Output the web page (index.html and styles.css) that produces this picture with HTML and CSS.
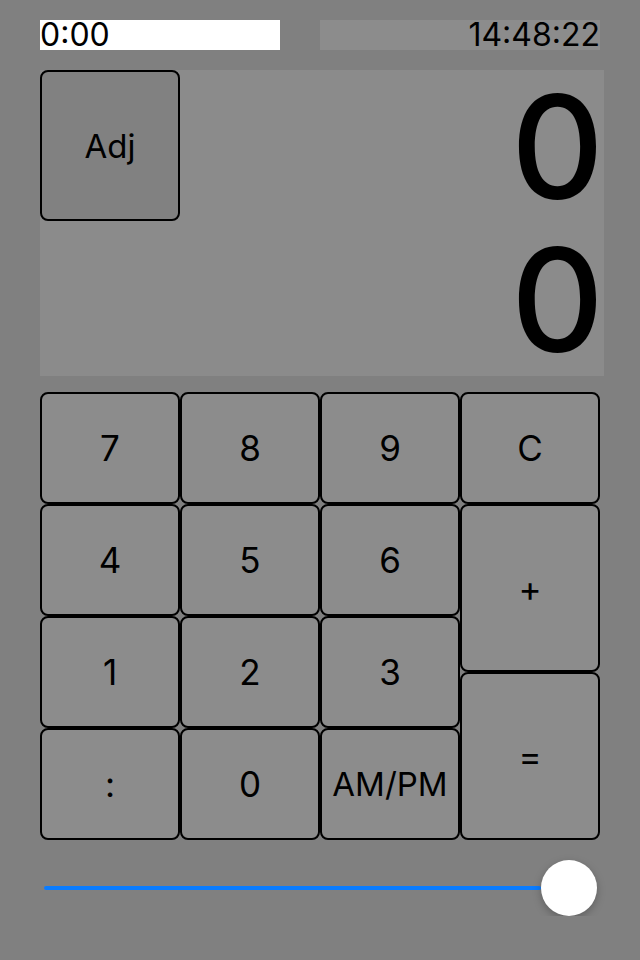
FILE: index.html
```html
<!DOCTYPE html>
<html lang="en">
<head>
    <meta charset="UTF-8">
    <meta name="viewport" content="width=device-width, initial-scale=1.0">
    <title>Time Calculator</title>
    <link rel="stylesheet" href="styles.css">
</head>
<body>
    <div class="top-bar">
        <div class="entry">0:00</div>
        <div class="clock">14:48:22</div>
    </div>

    <div class="display">
        <button class="adj-btn">Adj</button>
        <div class="readout">
            <div class="line">0</div>
            <div class="line">0</div>
        </div>
    </div>

    <div class="keypad">
        <button class="key k7">7</button>
        <button class="key k8">8</button>
        <button class="key k9">9</button>
        <button class="key kc">C</button>
        <button class="key k4">4</button>
        <button class="key k5">5</button>
        <button class="key k6">6</button>
        <button class="key kplus">+</button>
        <button class="key k1">1</button>
        <button class="key k2">2</button>
        <button class="key k3">3</button>
        <button class="key keq">=</button>
        <button class="key kcolon">:</button>
        <button class="key k0">0</button>
        <button class="key kampm">AM/PM</button>
    </div>

    <div class="slider">
        <div class="track"></div>
        <div class="thumb"></div>
    </div>
</body>
</html>
```

FILE: styles.css
```css
body {
    font-family: Inter, "Noto Sans", sans-serif;
    background-color: #808080;
    color: #000;
    margin: 0;
    padding: 20px 36px 0 40px;
}

.top-bar {
    display: flex;
    justify-content: space-between;
    width: 560px;
    height: 30px;
}

.entry {
    width: 240px;
    background: #fff;
    font-size: 32px;
    line-height: 30px;
}

.clock {
    width: 280px;
    background: #8c8c8c;
    font-size: 32px;
    line-height: 30px;
    text-align: right;
}

.display {
    display: flex;
    justify-content: space-between;
    width: 564px;
    height: 306px;
    margin-top: 20px;
    background: #8b8b8b;
}

.adj-btn {
    width: 140px;
    height: 151px;
    background: #818181;
    border: 2px solid #000;
    border-radius: 8px;
    font-family: inherit;
    font-size: 33px;
    color: #000;
    padding: 0;
}

.readout {
    display: flex;
    flex-direction: column;
    align-items: flex-end;
}

.line {
    height: 153px;
    font-size: 144px;
    font-weight: 500;
    line-height: 153px;
}

.keypad {
    display: grid;
    grid-template-columns: repeat(4, 140px);
    grid-template-rows: repeat(8, 56px);
    margin-top: 16px;
}

.key {
    background: #8c8c8c;
    border: 2px solid #000;
    border-radius: 8px;
    font-family: inherit;
    font-size: 35px;
    color: #000;
    padding: 0;
}

.k7, .k8, .k9, .kc { grid-row: 1 / 3; }
.k4, .k5, .k6 { grid-row: 3 / 5; }
.kplus { grid-row: 3 / 6; grid-column: 4; }
.k1, .k2, .k3 { grid-row: 5 / 7; }
.keq { grid-row: 6 / 9; grid-column: 4; }
.kcolon, .k0, .kampm { grid-row: 7 / 9; }
.kampm { font-size: 33px; }

.slider {
    display: flex;
    align-items: center;
    width: 553px;
    height: 56px;
    margin: 20px 0 0 4px;
}

.track {
    flex: 1;
    height: 4px;
    background: #0a7cff;
    border-radius: 2px;
}

.thumb {
    width: 56px;
    height: 56px;
    border-radius: 50%;
    background: #fff;
    box-shadow: 0 3px 8px rgba(0, 0, 0, 0.25);
}
```
